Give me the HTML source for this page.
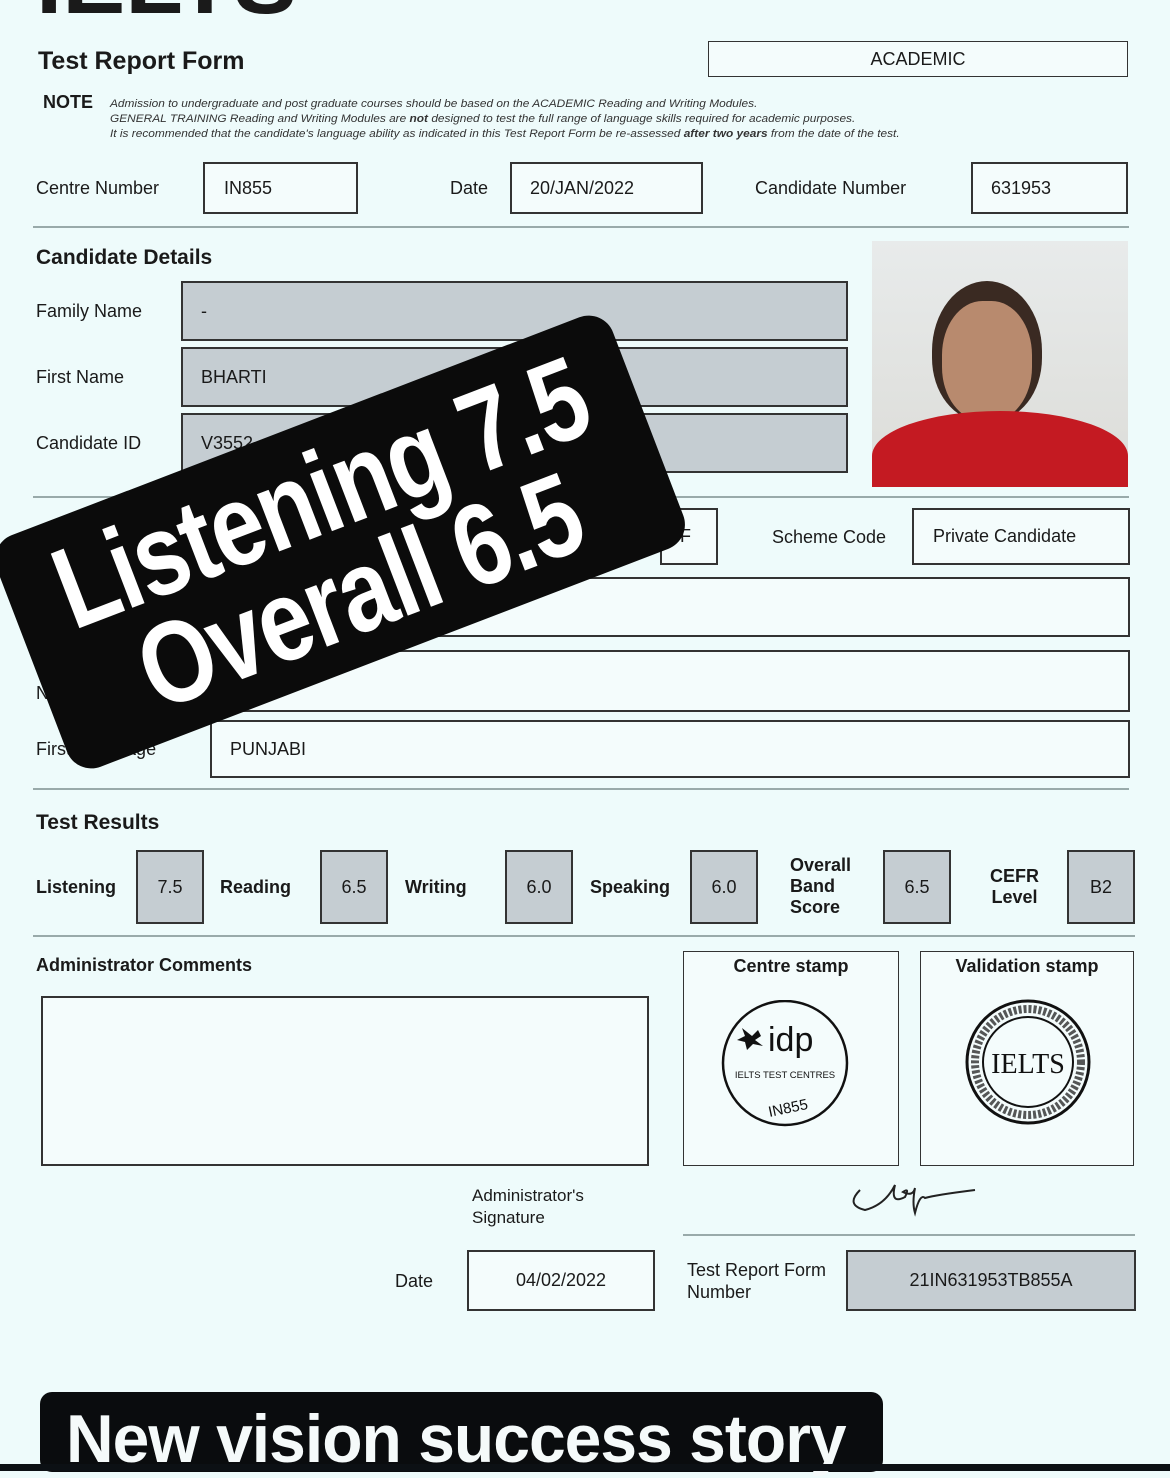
<!DOCTYPE html>
<html><head><meta charset="utf-8"><style>
*{margin:0;padding:0;box-sizing:border-box}
body{width:1170px;height:1471px;background:#eefbfb;position:relative;overflow:hidden;font-family:"Liberation Sans",Arial,sans-serif;color:#1a1a1a}
.a{position:absolute;white-space:nowrap}
.box{position:absolute;border:2px solid #333;background:#f4fcfc}
.g{background:#c5cdd2}
.l{font-size:18px}
.b{font-weight:bold}
.hr{position:absolute;height:2px;background:#9aa;left:33px}
.t{font-size:18px;display:flex;align-items:center}
</style></head><body>
<div class="a b" style="left:36px;top:-62px;font-size:90px;line-height:1;transform:scaleX(1.05);transform-origin:left;">IELTS</div>
<div class="a b" style="left:38px;top:47px;font-size:25px">Test Report Form</div>
<div class="box t" style="left:708px;top:41px;width:420px;height:36px;justify-content:center;font-size:18px;border-width:1.5px">ACADEMIC</div>
<div class="a b" style="left:43px;top:92px;font-size:18px">NOTE</div>
<div class="a" style="left:110px;top:97px;font-size:11px;font-style:italic;line-height:15px;color:#333;transform:scaleX(1.08);transform-origin:left">Admission to undergraduate and post graduate courses should be based on the ACADEMIC Reading and Writing Modules.<br>GENERAL TRAINING Reading and Writing Modules are <b>not</b> designed to test the full range of language skills required for academic purposes.<br>It is recommended that the candidate's language ability as indicated in this Test Report Form be re-assessed <b>after two years</b> from the date of the test.</div>
<div class="a l" style="left:36px;top:178px">Centre Number</div>
<div class="box t" style="left:203px;top:162px;width:155px;height:52px;padding-left:19px">IN855</div>
<div class="a l" style="left:450px;top:178px">Date</div>
<div class="box t" style="left:510px;top:162px;width:193px;height:52px;padding-left:18px">20/JAN/2022</div>
<div class="a l" style="left:755px;top:178px">Candidate Number</div>
<div class="box t" style="left:971px;top:162px;width:157px;height:52px;padding-left:18px">631953</div>
<div class="hr" style="top:226px;width:1096px"></div>
<div class="a b" style="left:36px;top:246px;font-size:21px">Candidate Details</div>
<div class="a l" style="left:36px;top:301px">Family Name</div>
<div class="box g t" style="left:181px;top:281px;width:667px;height:60px;padding-left:18px">-</div>
<div class="a l" style="left:36px;top:367px">First Name</div>
<div class="box g t" style="left:181px;top:347px;width:667px;height:60px;padding-left:18px">BHARTI</div>
<div class="a l" style="left:36px;top:433px">Candidate ID</div>
<div class="box g t" style="left:181px;top:413px;width:667px;height:60px;padding-left:18px">V3552</div>
<div style="position:absolute;left:872px;top:241px;width:256px;height:246px;background:linear-gradient(#e8ebeb,#dcdcd8);overflow:hidden">
<div style="position:absolute;left:60px;top:40px;width:110px;height:140px;border-radius:50% 50% 45% 45%;background:#3a2a22"></div>
<div style="position:absolute;left:70px;top:60px;width:90px;height:120px;border-radius:45%;background:#b88a6e"></div>
<div style="position:absolute;left:0;top:170px;width:256px;height:90px;border-radius:50% 50% 0 0;background:#c41a22"></div>
</div>
<div class="hr" style="top:496px;width:1096px"></div>
<div class="box t" style="left:660px;top:508px;width:58px;height:57px;padding-left:18px">F</div>
<div class="a l" style="left:772px;top:527px">Scheme Code</div>
<div class="box t" style="left:912px;top:508px;width:218px;height:57px;padding-left:19px">Private Candidate</div>
<div class="box" style="left:210px;top:577px;width:920px;height:60px"></div>
<div class="a l" style="left:36px;top:660px;line-height:22px">Country<br>Nationality</div>
<div class="box" style="left:210px;top:650px;width:920px;height:62px"></div>
<div class="a l" style="left:36px;top:739px">First Language</div>
<div class="box t" style="left:210px;top:720px;width:920px;height:58px;padding-left:18px">PUNJABI</div>
<div class="hr" style="top:788px;width:1096px"></div>
<div class="a b" style="left:36px;top:811px;font-size:21px">Test Results</div>
<div class="a b l" style="left:36px;top:877px">Listening</div>
<div class="box g t" style="left:136px;top:850px;width:68px;height:74px;justify-content:center">7.5</div>
<div class="a b l" style="left:220px;top:877px">Reading</div>
<div class="box g t" style="left:320px;top:850px;width:68px;height:74px;justify-content:center">6.5</div>
<div class="a b l" style="left:405px;top:877px">Writing</div>
<div class="box g t" style="left:505px;top:850px;width:68px;height:74px;justify-content:center">6.0</div>
<div class="a b l" style="left:590px;top:877px">Speaking</div>
<div class="box g t" style="left:690px;top:850px;width:68px;height:74px;justify-content:center">6.0</div>
<div class="a b l" style="left:790px;top:855px;line-height:21px">Overall<br>Band<br>Score</div>
<div class="box g t" style="left:883px;top:850px;width:68px;height:74px;justify-content:center">6.5</div>
<div class="a b l" style="left:990px;top:866px;line-height:21px;text-align:center">CEFR<br>Level</div>
<div class="box g t" style="left:1067px;top:850px;width:68px;height:74px;justify-content:center">B2</div>
<div class="hr" style="top:935px;width:1102px"></div>
<div class="a b" style="left:36px;top:955px;font-size:18px">Administrator Comments</div>
<div class="box" style="left:41px;top:996px;width:608px;height:170px"></div>
<div class="box" style="left:683px;top:951px;width:216px;height:215px;border-width:1.5px"></div>
<div class="a b" style="left:683px;top:956px;width:216px;text-align:center;font-size:18px">Centre stamp</div>
<svg class="a" style="left:720px;top:1000px" width="130" height="128" viewBox="0 0 130 128">
<circle cx="65" cy="63" r="62" fill="none" stroke="#111" stroke-width="2.5"/>
<path d="M22 28 l10 8 l6 -6 l3 6 l-6 4 l8 6 l-10 -2 l-6 6 l-2 -8 l-8 -2 l8 -4z" fill="#111"/>
<text x="48" y="51" font-family="Liberation Sans" font-size="34" fill="#111">idp</text>
<text x="65" y="78" text-anchor="middle" font-family="Liberation Sans" font-size="9.5" fill="#111">IELTS TEST CENTRES</text>
<text x="68" y="113" text-anchor="middle" font-family="Liberation Sans" font-size="15" fill="#111" transform="rotate(-12 68 108)">IN855</text>
</svg>
<div class="box" style="left:920px;top:951px;width:214px;height:215px;border-width:1.5px"></div>
<div class="a b" style="left:920px;top:956px;width:214px;text-align:center;font-size:18px">Validation stamp</div>
<svg class="a" style="left:963px;top:998px" width="130" height="128" viewBox="0 0 130 128">
<circle cx="65" cy="64" r="61" fill="none" stroke="#111" stroke-width="3"/>
<circle cx="65" cy="64" r="45" fill="none" stroke="#111" stroke-width="2"/>
<circle cx="65" cy="64" r="53" fill="none" stroke="#111" stroke-width="8" stroke-dasharray="3 2" opacity=".7"/>
<text x="65" y="75" text-anchor="middle" font-family="Liberation Serif" font-size="28" fill="#111">IELTS</text>
</svg>
<div class="a" style="left:472px;top:1185px;font-size:17px;line-height:22px">Administrator's<br>Signature</div>
<svg class="a" style="left:840px;top:1170px" width="145" height="50"><path d="M20 20 q-15 15 5 20 q20 -5 30 -25 q-5 20 10 12 q5 -10 -2 -5 q10 5 12 -4 q-3 15 0 25 q5 -20 10 -15 q10 -3 50 -8" fill="none" stroke="#222" stroke-width="2"/></svg>
<div class="hr" style="left:683px;top:1234px;width:452px"></div>
<div class="a l" style="left:395px;top:1271px">Date</div>
<div class="box t" style="left:467px;top:1250px;width:188px;height:61px;justify-content:center">04/02/2022</div>
<div class="a" style="left:687px;top:1259px;font-size:18px;line-height:22px">Test Report Form<br>Number</div>
<div class="box g t" style="left:846px;top:1250px;width:290px;height:61px;justify-content:center">21IN631953TB855A</div>
<div class="a" style="left:40px;top:1392px;width:843px;height:80px;background:#0a0c0e;border-radius:12px"></div>
<div class="a b" style="left:66px;top:1400px;font-size:68px;color:#f5fafa;transform:scaleX(.97);transform-origin:left;letter-spacing:-1px">New vision success story</div>
<div class="a" style="left:0;top:1464px;width:1170px;height:7px;background:#0c1014"></div>
<div class="a" style="left:10px;top:418px;width:660px;height:248px;background:#0b0b0b;border-radius:26px;transform:rotate(-21deg);transform-origin:center;display:flex;flex-direction:column;align-items:center;justify-content:center">
<div class="b" style="color:#fff;font-size:116px;line-height:106px;letter-spacing:-2px;transform:scaleX(.82)">Listening 7.5</div>
<div class="b" style="color:#fff;font-size:116px;line-height:106px;letter-spacing:-2px;transform:scaleX(.82)">Overall 6.5</div>
</div>
</body></html>
